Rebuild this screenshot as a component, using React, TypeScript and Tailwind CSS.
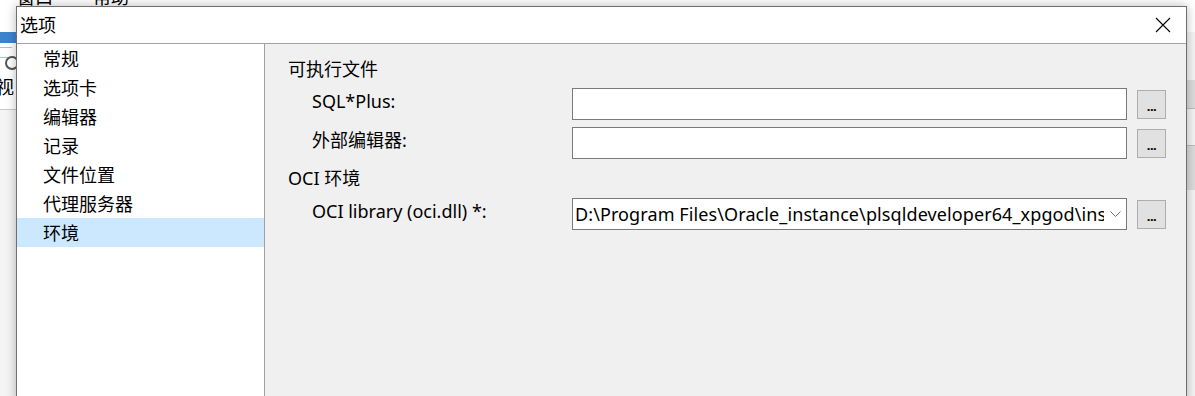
import React from 'react';

const items = ['常规', '选项卡', '编辑器', '记录', '文件位置', '代理服务器', '环境'];

const Browse = () => (
  <div className="ml-[10px] w-[29px] h-[29px] shrink-0 bg-[#e1e1e1] border border-[#adadad] flex items-end justify-center pb-[5px]">
    <span className="text-[13px] leading-none font-bold tracking-[-0.5px]">...</span>
  </div>
);

const Field = ({ label, children }: { label: string; children?: React.ReactNode }) => (
  <div className="flex items-center h-[32px] pl-[24px]">
    <div className="w-[260px] shrink-0 text-[18px] leading-[24px] -mt-[6px]">{label}</div>
    <div className="w-[555px] h-[32px] shrink-0 bg-white border border-[#7a7a7a] flex items-center">{children}</div>
    <Browse />
  </div>
);

export default function App() {
  return (
    <div className="relative w-[1195px] h-[396px] overflow-hidden bg-[#f4f4f4] text-black font-['Noto_Sans','Noto_Sans_CJK_SC',sans-serif]">
      {/* parent window behind the dialog */}
      <div className="absolute inset-0 flex flex-col">
        <div className="h-[32px] bg-white flex items-start gap-[40px] pl-[17px] overflow-hidden">
          <span className="-mt-[12px] text-[18px] leading-[18px]">窗口</span>
          <span className="-mt-[12px] text-[18px] leading-[18px]">帮助</span>
        </div>
        <div className="flex flex-1">
          <div className="w-[16px] flex flex-col">
            <div className="h-[11px] bg-[#3d84cf]" />
            <div className="h-[66px] bg-white relative overflow-hidden">
              <div className="absolute left-0 top-[4px] w-[12px] h-[1px] bg-[#9cc3ea]" />
              <div className="absolute left-0 top-[14px] w-[12px] h-[1px] bg-[#9cc3ea]" />
              <div className="absolute left-[5px] top-[13px] w-[14px] h-[14px] rounded-full border-2 border-[#555]" />
              <span className="absolute -left-[4px] top-[33px] text-[18px] leading-[22px]">视</span>
            </div>
            <div className="h-[1px] bg-[#c8c8c8]" />
          </div>
          <div className="flex-1" />
          <div className="w-[8px] flex flex-col pt-[48px]">
            <div className="h-[29px] bg-[#dcdcdc] border-b border-[#bdbdbd]" />
            <div className="h-[37px] border-b border-[#bdbdbd]" />
            <div className="h-[44px] bg-[#dcdcdc]" />
          </div>
        </div>
      </div>

      {/* dialog */}
      <div className="absolute left-[16px] top-[6px] w-[1171px] h-[400px] border border-[#6f6f6f] bg-white flex flex-col shadow-[0_0_10px_rgba(0,0,0,0.28)]">
        <div className="h-[37px] shrink-0 flex items-center justify-between border-b border-[#a3a3a3]">
          <span className="pl-[3px] text-[18px] leading-[24px]">选项</span>
          <div className="w-[46px] h-full flex items-center justify-center">
            <svg width="16" height="16" viewBox="0 0 16 16">
              <path d="M1 1 L15 15 M15 1 L1 15" stroke="#000" strokeWidth="1.1" fill="none" />
            </svg>
          </div>
        </div>
        <div className="flex flex-1">
          <div className="w-[248px] shrink-0 bg-white border-r border-[#a0a0a0]">
            {items.map((it, i) => (
              <div
                key={it}
                className={`h-[29px] pl-[26px] flex items-center text-[18px] leading-[24px] ${i === items.length - 1 ? 'bg-[#cce8ff]' : ''}`}
              >
                {it}
              </div>
            ))}
          </div>
          <div className="flex-1 bg-[#f0f0f0] pl-[23px] pt-[13px] flex flex-col">
            <div className="h-[24px] text-[18px] leading-[24px]">可执行文件</div>
            <div className="mt-[7px] flex flex-col gap-[7px]">
              <Field label="SQL*Plus:" />
              <Field label="外部编辑器:" />
            </div>
            <div className="mt-[7px] h-[24px] text-[18px] leading-[24px]">OCI 环境</div>
            <div className="mt-[8px]">
              <Field label="OCI library (oci.dll) *:">
                <div className="w-[531px] pl-[2px] overflow-hidden">
                  <span className="block whitespace-nowrap text-[18px] leading-[24px] tracking-[0.1px]">
                    {'D:\\Program Files\\Oracle_instance\\plsqldeveloper64_xpgod\\instantclient_11_2\\oci.dll'}
                  </span>
                </div>
                <div className="flex-1 flex items-center justify-center">
                  <svg width="11" height="7" viewBox="0 0 11 7">
                    <path d="M0.5 0.5 L5.5 5.5 L10.5 0.5" stroke="#707070" strokeWidth="1" fill="none" />
                  </svg>
                </div>
              </Field>
            </div>
          </div>
        </div>
      </div>
    </div>
  );
}
